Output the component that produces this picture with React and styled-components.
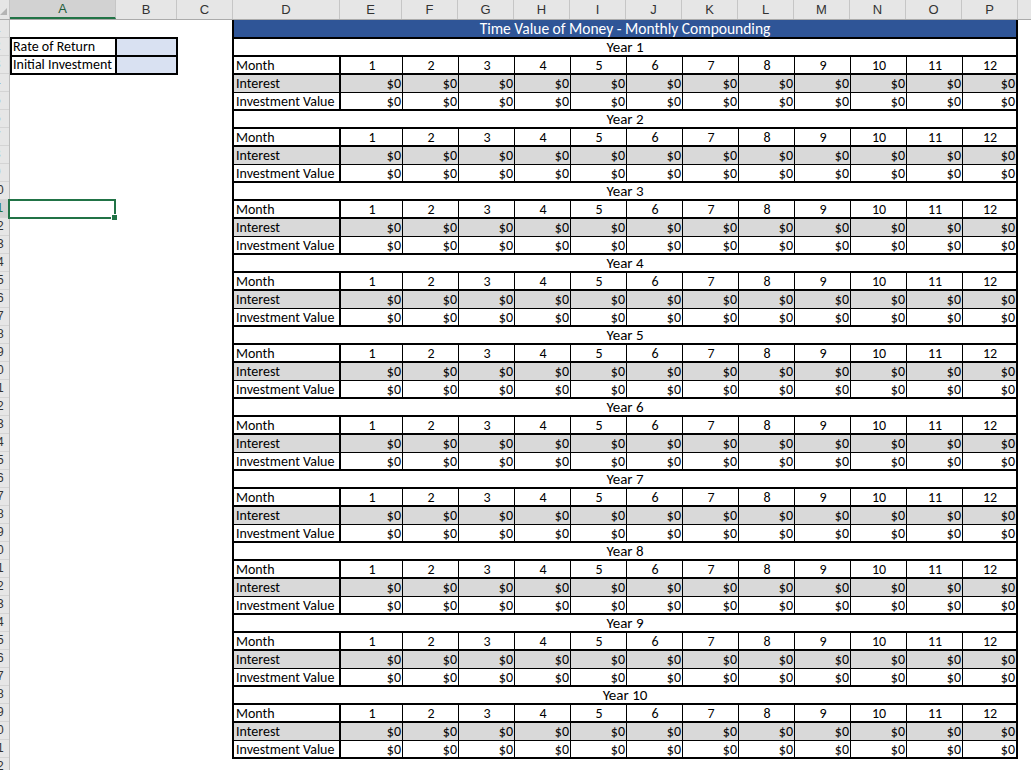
import React from 'react';
import styled, { createGlobalStyle } from 'styled-components';

const GlobalStyle = createGlobalStyle`
  html, body { margin: 0; padding: 0; background: #fff; }
  body {
    width: 1031px; height: 770px; overflow: hidden;
    font-family: Carlito, Calibri, Lato, "Liberation Sans", sans-serif;
    color: #000;
  }
`;

const GREEN = '#217346';

const Sheet = styled.div`
  width: 1031px;
  height: 770px;
  display: flex;
  flex-direction: column;
  overflow: hidden;
`;

const HeaderBar = styled.div`
  display: flex;
  height: 20px;
  flex: none;
  background: #e6e6e6;
  border-bottom: 1px solid #ababab;
  box-sizing: border-box;
`;

const Corner = styled.div`
  width: 10px;
  flex: none;
  box-sizing: border-box;
  border-right: 1px solid #c6c6c6;
  display: flex;
  align-items: flex-end;
  padding: 0 0 3px 0;
`;

const HeaderCell = styled.div`
  width: ${p => p.$w}px;
  flex: none;
  box-sizing: border-box;
  border-right: 1px solid #c6c6c6;
  background: ${p => (p.$selected ? '#d2d2d2' : 'transparent')};
  border-bottom: ${p => (p.$selected ? `2px solid ${GREEN}` : 'none')};
  font-family: "Liberation Sans", Arial, sans-serif;
  font-size: 13px;
  color: ${p => (p.$selected ? '#1e5c3a' : '#333')};
  display: flex;
  align-items: center;
  justify-content: center;
  line-height: 19px;
`;

const HeaderFiller = styled.div`
  flex: 1;
`;

const Body = styled.div`
  display: flex;
  flex: 1;
  min-height: 0;
`;

const RowStrip = styled.div`
  width: 10px;
  flex: none;
  background: #e6e6e6;
  border-right: 1px solid #bdbdbd;
  box-sizing: border-box;
  overflow: hidden;
`;

const RowNum = styled.div`
  height: 18px;
  box-sizing: border-box;
  border-bottom: 1px solid #d4d4d4;
  overflow: hidden;
  background: ${p => (p.$selected ? '#d2d2d2' : 'transparent')};
  color: ${p => (p.$selected ? GREEN : '#333')};
`;

const RowNumText = styled.div`
  width: 24px;
  margin-left: -15px;
  text-align: center;
  font-family: "Liberation Sans", Arial, sans-serif;
  font-size: 12px;
  line-height: 17px;
`;

const Canvas = styled.div`
  display: flex;
  flex: 1;
  min-width: 0;
`;

const LeftArea = styled.div`
  width: 222px;
  flex: none;
  display: flex;
  flex-direction: column;
  align-items: flex-start;
`;

const InputBox = styled.div`
  margin-top: 17px;
  display: grid;
  grid-template-columns: 105px 59px;
  border: 2px solid #000;
`;

const InputLabel = styled.div`
  height: ${p => (p.$last ? 16 : 18)}px;
  box-sizing: border-box;
  border-right: 2px solid #000;
  border-bottom: ${p => (p.$last ? 'none' : '2px solid #000')};
  padding-left: 1px;
  font-size: 14px;
  line-height: 16px;
  white-space: nowrap;
  overflow: hidden;
`;

const InputValue = styled.div`
  height: ${p => (p.$last ? 16 : 18)}px;
  box-sizing: border-box;
  border-bottom: ${p => (p.$last ? 'none' : '2px solid #000')};
  background: #d9e1f2;
`;

const SelectedCell = styled.div`
  position: relative;
  margin-top: 124px;
  margin-left: -2px;
  width: 108px;
  height: 20px;
  box-sizing: border-box;
  border: 2px solid ${GREEN};
`;

const FillHandle = styled.div`
  position: absolute;
  right: -4px;
  bottom: -4px;
  width: 5px;
  height: 5px;
  background: ${GREEN};
  border: 1px solid #fff;
`;

const Table = styled.div`
  width: 786px;
  flex: none;
  box-sizing: border-box;
  border-left: 2px solid #000;
  border-right: 2px solid #000;
  border-bottom: 2px solid #000;
  align-self: flex-start;
`;

const TitleBar = styled.div`
  height: 19px;
  box-sizing: border-box;
  border-bottom: 2px solid #000;
  background: #2f5597;
  color: #fff;
  text-align: center;
  font-size: 15.5px;
  line-height: 17px;
`;

const YearLabel = styled.div`
  height: 16px;
  text-align: center;
  font-size: 15px;
  line-height: 17px;
`;

const DataGrid = styled.div`
  display: grid;
  grid-template-columns: 107px 62px repeat(10, 56px) 53px;
  border-top: 2px solid #000;
  border-bottom: ${p => (p.$last ? 'none' : '2px solid #000')};
`;

const rowHeights = { month: 18, interest: 18, value: 16 };

const Cell = styled.div`
  height: ${p => rowHeights[p.$kind]}px;
  box-sizing: border-box;
  background: ${p => (p.$kind === 'interest' ? '#d9d9d9' : 'transparent')};
  border-bottom: ${p =>
    p.$kind === 'month' ? '2px solid #000' : p.$kind === 'interest' ? '1px solid #000' : 'none'};
  border-right: ${p => (p.$col === 0 ? '2px solid #000' : p.$col === 12 ? 'none' : '1px solid #000')};
  font-size: 14px;
  line-height: 17px;
  padding: 0 1px 0 2px;
  white-space: nowrap;
  overflow: hidden;
  text-align: ${p => p.$align};
`;

const RightArea = styled.div`
  flex: 1;
`;

const COLUMNS = [
  ['A', 106], ['B', 61], ['C', 56], ['D', 107], ['E', 62],
  ['F', 56], ['G', 56], ['H', 56], ['I', 56], ['J', 56], ['K', 56],
  ['L', 56], ['M', 56], ['N', 56], ['O', 56], ['P', 56],
];

const MONTHS = Array.from({ length: 12 }, (_, i) => i + 1);
const YEARS = Array.from({ length: 10 }, (_, i) => i + 1);
const ROWS = Array.from({ length: 42 }, (_, i) => i + 1);

function DataRow({ kind, label }) {
  return (
    <>
      <Cell $kind={kind} $col={0} $align="left">{label}</Cell>
      {MONTHS.map((m, i) => (
        <Cell key={m} $kind={kind} $col={i + 1} $align={kind === 'month' ? 'center' : 'right'}>
          {kind === 'month' ? m : '$0'}
        </Cell>
      ))}
    </>
  );
}

function YearBlock({ year }) {
  return (
    <>
      <YearLabel>Year {year}</YearLabel>
      <DataGrid $last={year === 10}>
        <DataRow kind="month" label="Month" />
        <DataRow kind="interest" label="Interest" />
        <DataRow kind="value" label="Investment Value" />
      </DataGrid>
    </>
  );
}

export default function App() {
  return (
    <>
      <GlobalStyle />
      <Sheet>
        <HeaderBar>
          <Corner>
            <svg width="8" height="8" viewBox="0 0 8 8">
              <polygon points="7,0 7,7 0,7" fill="#b4b4b4" />
            </svg>
          </Corner>
          {COLUMNS.map(([l, w]) => (
            <HeaderCell key={l} $w={w} $selected={l === 'A'}>{l}</HeaderCell>
          ))}
          <HeaderFiller />
        </HeaderBar>
        <Body>
          <RowStrip>
            {ROWS.map(r => (
              <RowNum key={r} $selected={r === 11}>
                <RowNumText>{r}</RowNumText>
              </RowNum>
            ))}
          </RowStrip>
          <Canvas>
            <LeftArea>
              <InputBox>
                <InputLabel>Rate of Return</InputLabel>
                <InputValue />
                <InputLabel $last>Initial Investment</InputLabel>
                <InputValue $last />
              </InputBox>
              <SelectedCell>
                <FillHandle />
              </SelectedCell>
            </LeftArea>
            <Table>
              <TitleBar>Time Value of Money - Monthly Compounding</TitleBar>
              {YEARS.map(y => (
                <YearBlock key={y} year={y} />
              ))}
            </Table>
            <RightArea />
          </Canvas>
        </Body>
      </Sheet>
    </>
  );
}
